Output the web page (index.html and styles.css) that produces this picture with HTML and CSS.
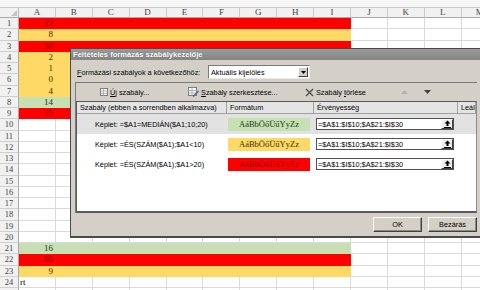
FILE: index.html
```html
<!DOCTYPE html>
<html lang="hu">
<head>
    <meta charset="UTF-8">
    <meta name="viewport" content="width=device-width, initial-scale=1.0">
    <title>Feltételes formázás szabálykezelője</title>
    <link rel="stylesheet" href="styles.css">
</head>
<body>
    <div class="workbook">
        <div class="formula-strip"></div>
        <div class="sheet" id="sheet"></div>

        <div class="dialog">
            <div class="dialog-title">Feltételes formázás szabálykezelője</div>
            <div class="dialog-body">
                <div class="scope-row">
                    <span class="scope-label"><u>F</u>ormázási szabályok a következőhöz:</span>
                    <div class="combo">
                        <span class="combo-text">Aktuális kijelölés</span>
                        <span class="combo-btn">
                            <svg width="5" height="3" viewBox="0 0 5 3"><path d="M0 0h5L2.5 3z" fill="#000"/></svg>
                        </span>
                    </div>
                </div>

                <div class="rules-frame">
                    <div class="toolbar">
                        <span class="tool">
                            <svg width="8" height="8" viewBox="0 0 8 8"><rect x="0.5" y="0.5" width="7" height="7" fill="#fff" stroke="#7a7a7a"/><path d="M0.5 3h7M0.5 5.5h7M3.5 0.5v7" stroke="#b0b0b0"/></svg>
                            <span><u>Ú</u>j szabály...</span>
                        </span>
                        <span class="tool">
                            <svg width="11" height="10" viewBox="0 0 11 10"><rect x="0.5" y="0.5" width="8" height="8" fill="#fff" stroke="#7a7a7a"/><path d="M0.5 3.5h8M0.5 6h8M4 0.5v8" stroke="#b0b0b0"/><path d="M5 9.5L10.5 4" stroke="#4a6fa5" stroke-width="1.6"/></svg>
                            <span><u>S</u>zabály szerkesztése...</span>
                        </span>
                        <span class="tool">
                            <svg width="9" height="9" viewBox="0 0 9 9"><path d="M1 1l7 7M8 1L1 8" stroke="#505050" stroke-width="1.4"/></svg>
                            <span>Szabály <u>t</u>örlése</span>
                        </span>
                        <span class="tool">
                            <svg width="7" height="4" viewBox="0 0 7 4"><path d="M0 4h7L3.5 0z" fill="#b4b4b4"/></svg>
                        </span>
                        <span class="tool">
                            <svg width="7" height="4" viewBox="0 0 7 4"><path d="M0 0h7L3.5 4z" fill="#404040"/></svg>
                        </span>
                    </div>

                    <div class="rules">
                        <div class="rules-head">
                            <span>Szabály (ebben a sorrendben alkalmazva)</span>
                            <span>Formátum</span>
                            <span>Érvényesség</span>
                            <span>Leállítás, ha igaz</span>
                        </div>
                        <div class="rule selected">
                            <span class="rule-name">Képlet: =$A1=MEDIÁN($A1;10;20)</span>
                            <span class="swatch swatch-green">AáBbÖőÜűYyZz</span>
                            <span class="range">
                                <span class="range-text">=$A$1:$I$10;$A$21:$I$30</span>
                                <span class="range-btn"><svg width="7" height="8" viewBox="0 0 7 8"><path d="M3.5 0.5L6.5 3.5H4.5V6H2.5V3.5H0.5z" fill="#000"/><rect y="7" width="7" height="1" fill="#000"/></svg></span>
                            </span>
                            <span></span>
                        </div>
                        <div class="rule">
                            <span class="rule-name">Képlet: =ÉS(SZÁM($A1);$A1&lt;10)</span>
                            <span class="swatch swatch-yellow">AáBbÖőÜűYyZz</span>
                            <span class="range">
                                <span class="range-text">=$A$1:$I$10;$A$21:$I$30</span>
                                <span class="range-btn"><svg width="7" height="8" viewBox="0 0 7 8"><path d="M3.5 0.5L6.5 3.5H4.5V6H2.5V3.5H0.5z" fill="#000"/><rect y="7" width="7" height="1" fill="#000"/></svg></span>
                            </span>
                            <span></span>
                        </div>
                        <div class="rule">
                            <span class="rule-name">Képlet: =ÉS(SZÁM($A1);$A1&gt;20)</span>
                            <span class="swatch swatch-red">AáBbÖőÜűYyZz</span>
                            <span class="range">
                                <span class="range-text">=$A$1:$I$10;$A$21:$I$30</span>
                                <span class="range-btn"><svg width="7" height="8" viewBox="0 0 7 8"><path d="M3.5 0.5L6.5 3.5H4.5V6H2.5V3.5H0.5z" fill="#000"/><rect y="7" width="7" height="1" fill="#000"/></svg></span>
                            </span>
                            <span></span>
                        </div>
                    </div>
                </div>

                <div class="dialog-buttons">
                    <button class="btn">OK</button>
                    <button class="btn">Bezárás</button>
                </div>
            </div>
        </div>
    </div>

    <script>
        document.addEventListener('DOMContentLoaded', function() {
            const sheet = document.getElementById('sheet');
            const letters = 'ABCDEFGHIJKLM';
            const fills = {1: 'red', 2: 'yellow', 3: 'red', 4: 'yellow', 5: 'yellow', 6: 'yellow', 7: 'yellow',
                           8: 'green', 9: 'red', 21: 'green', 22: 'red', 23: 'yellow'};
            const values = {1: 22, 2: 8, 3: 30, 4: 2, 5: 1, 6: 0, 7: 4, 8: 14, 9: 35, 21: 16, 22: 60, 23: 9};

            // fejléc sor
            let html = '<div class="cell corner"><span class="corner-mark"></span></div>';
            for (const l of letters) {
                html += `<div class="cell col-head">${l}</div>`;
            }

            for (let r = 1; r <= 25; r++) {
                html += `<div class="cell row-head">${r}</div>`;
                for (let c = 0; c < letters.length; c++) {
                    let cls = 'cell';
                    if (fills[r] && c < 9) cls += ' fill-' + fills[r];
                    let text = '';
                    if (c === 0 && values[r] !== undefined) {
                        cls += ' num';
                        text = values[r];
                    }
                    if (c === 0 && r === 24) text = 'rt';
                    html += `<div class="${cls}">${text}</div>`;
                }
            }
            sheet.innerHTML = html;
        });
    </script>
</body>
</html>
```

FILE: styles.css
```css
* {
    box-sizing: border-box;
}
body {
    margin: 0;
    background-color: #fff;
    font-family: "Liberation Serif", serif;
    overflow: hidden;
}
.workbook {
    position: relative;
    width: 480px;
    height: 290px;
    overflow: hidden;
}
.formula-strip {
    height: 8px;
    background-color: #f6f6f6;
    border-bottom: 1px solid #c8c8c8;
}

/* hoja */
.sheet {
    display: grid;
    grid-template-columns: 19px repeat(13, 36.9px);
    grid-template-rows: 10px;
    grid-auto-rows: 11.25px;
    font-size: 9px;
    color: #000;
}
.cell {
    border-right: 1px solid #dadada;
    border-bottom: 1px solid #dadada;
    line-height: 10px;
    padding: 0 1px;
    white-space: nowrap;
}
.cell.num {
    text-align: right;
    padding-right: 2px;
}
.corner {
    position: relative;
    background-color: #f1f1f1;
    border-right-color: #b9b9b9;
    border-bottom-color: #a9a9a9;
}
.corner-mark {
    position: absolute;
    right: 1px;
    bottom: 1px;
    border-left: 6px solid transparent;
    border-bottom: 6px solid #c4c4c4;
}
.col-head {
    background-color: #f1f1f1;
    border-right-color: #c9c9c9;
    border-bottom-color: #a9a9a9;
    text-align: center;
    color: #444;
    line-height: 9px;
}
.row-head {
    background-color: #f1f1f1;
    border-right-color: #a9a9a9;
    border-bottom-color: #cfcfcf;
    text-align: center;
    color: #444;
    font-size: 8.5px;
}
.fill-red {
    background-color: #ff0000;
    border-color: transparent;
    color: #8b0008;
}
.fill-yellow {
    background-color: #ffd966;
    border-color: transparent;
    color: #3a3000;
}
.fill-green {
    background-color: #c6e0b4;
    border-color: transparent;
    color: #1d3a14;
}

/* dialog */
.dialog {
    position: absolute;
    left: 70px;
    top: 48px;
    width: 414px;
    height: 190px;
    border: 1px solid #4a4a4a;
    border-bottom-width: 2px;
    background-color: #d4d0c8;
    font-family: "Liberation Sans", sans-serif;
    font-size: 7.3px;
    color: #000;
    display: flex;
    flex-direction: column;
}
.dialog-title {
    height: 11px;
    line-height: 11px;
    background: linear-gradient(#9a9a9a, #858585);
    color: #fff;
    font-weight: bold;
    font-size: 7.6px;
    padding-left: 2px;
    text-shadow: 0 0 1px #555;
}
.dialog-body {
    flex: 1;
    padding: 5px 6px 0 4px;
    display: flex;
    flex-direction: column;
}
.scope-row {
    display: grid;
    grid-template-columns: 133px 102px;
    align-items: center;
    height: 14px;
}
.scope-label {
    padding-left: 2px;
}
.combo {
    height: 14px;
    background-color: #fff;
    border: 1px solid;
    border-color: #7a7a7a #e8e8e8 #e8e8e8 #7a7a7a;
    display: flex;
    align-items: center;
    justify-content: space-between;
    padding-left: 2px;
}
.combo-btn {
    width: 10px;
    height: 10px;
    margin-right: 1px;
    background-color: #d4d0c8;
    border: 1px solid;
    border-color: #fff #404040 #404040 #fff;
    display: flex;
    align-items: center;
    justify-content: center;
}

.rules-frame {
    margin-top: 3px;
    height: 131px;
    border-top: 1px solid #7a7a7a;
    border-left: 1px solid #7a7a7a;
    display: flex;
    flex-direction: column;
}
.toolbar {
    height: 18px;
    display: grid;
    grid-template-columns: 24px 88px 117px 96px 23px 20px;
    align-items: center;
}
.toolbar::before {
    content: "";
}
.tool {
    display: flex;
    align-items: center;
    gap: 2px;
}
.rules {
    flex: 1;
    background-color: #fff;
    border: 1px solid;
    border-color: #5a5a5a #8a8a8a #5a5a5a #5a5a5a;
    border-bottom-width: 2px;
    overflow: hidden;
}
.rules-head,
.rule {
    display: grid;
    grid-template-columns: 150px 87px 144px 1fr;
}
.rules-head {
    height: 12px;
    background-color: #e4e4e4;
    border-bottom: 1px solid #a0a0a0;
}
.rules-head span {
    padding-left: 3px;
    line-height: 11px;
    border-right: 1px solid #a0a0a0;
    white-space: nowrap;
    overflow: hidden;
}
.rule {
    height: 20px;
    align-items: center;
}
.rule.selected {
    background-color: #e2e2e2;
}
.rule-name {
    padding-left: 18px;
    white-space: nowrap;
}
.swatch {
    margin-left: 1px;
    width: 82px;
    height: 13px;
    line-height: 13px;
    text-align: center;
    font-family: "Liberation Serif", serif;
    font-size: 8.5px;
}
.swatch-green {
    background-color: #c6e0b4;
    color: #1d3a14;
}
.swatch-yellow {
    background-color: #ffd966;
    color: #3a3000;
}
.swatch-red {
    background-color: #ff0000;
    color: #8b0008;
}
.range {
    margin-left: 2px;
    width: 138px;
    height: 12px;
    background-color: #fff;
    border: 1px solid #505050;
    display: flex;
    align-items: center;
    justify-content: space-between;
    padding-left: 1px;
}
.range-btn {
    width: 12px;
    height: 10px;
    background-color: #ececec;
    border: 1px solid;
    border-color: #fff #404040 #404040 #fff;
    display: flex;
    align-items: center;
    justify-content: center;
}

.dialog-buttons {
    margin-top: 4px;
    display: flex;
    justify-content: flex-end;
    gap: 6px;
}
.btn {
    width: 49px;
    height: 15px;
    padding: 0;
    background-color: #d4d0c8;
    border: 1px solid;
    border-color: #fff #404040 #404040 #fff;
    box-shadow: inset -1px -1px 0 #8a8a8a;
    font-family: "Liberation Sans", sans-serif;
    font-size: 7.3px;
    color: #000;
}
```
